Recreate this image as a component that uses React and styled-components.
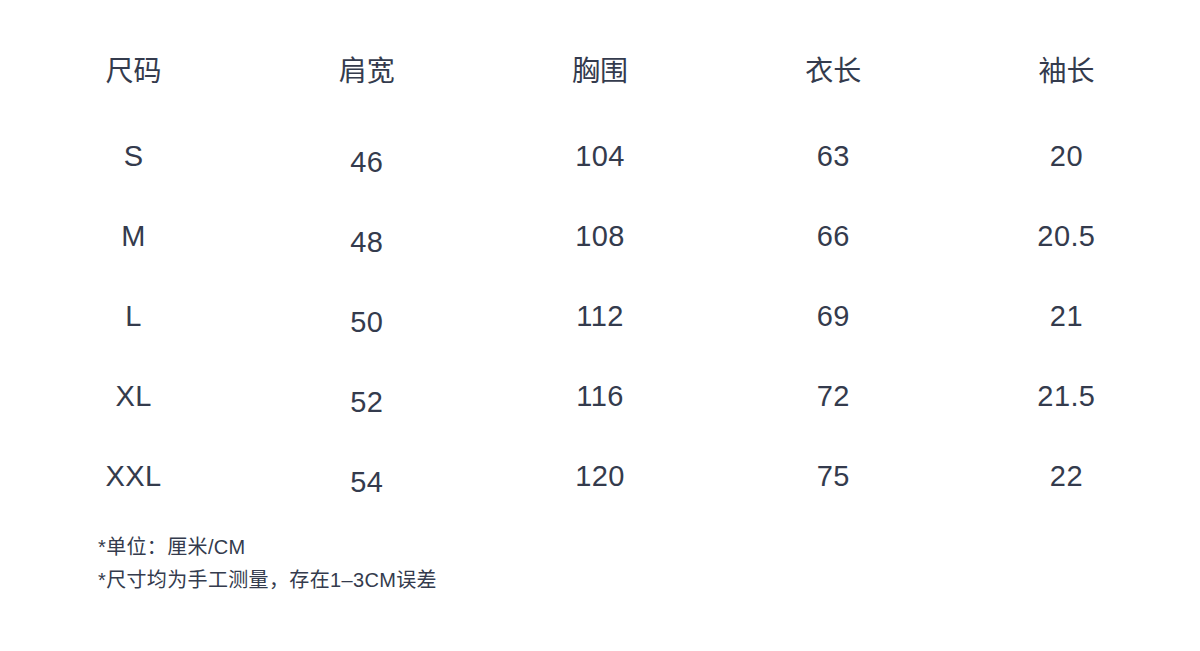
import styled, { createGlobalStyle } from 'styled-components';

const GlobalStyle = createGlobalStyle`
  html, body {
    margin: 0;
    padding: 0;
    background: #ffffff;
  }
  body {
    font-family: 'Liberation Sans', 'Noto Sans CJK SC', sans-serif;
    color: #343b4d;
  }
`;

const columns = ['尺码', '肩宽', '胸围', '衣长', '袖长'];

const rows = [
  ['S', '46', '104', '63', '20'],
  ['M', '48', '108', '66', '20.5'],
  ['L', '50', '112', '69', '21'],
  ['XL', '52', '116', '72', '21.5'],
  ['XXL', '54', '120', '75', '22'],
];

const Page = styled.div`
  width: 1200px;
  height: 651px;
  background: #fff;
  box-sizing: border-box;
  padding: 52px 17px 0;
`;

const Table = styled.div`
  display: grid;
  grid-template-columns: repeat(5, 1fr);
`;

const HeadCell = styled.div`
  height: 40px;
  line-height: 40px;
  margin-bottom: 44px;
  text-align: center;
  font-size: 28px;
`;

// 肩宽 column sits a few pixels lower in the source image
const Cell = styled.div`
  height: 80px;
  line-height: 40px;
  text-align: center;
  font-size: 29px;
  letter-spacing: 0.4px;
  padding-top: ${(p) => (p.$shift ? '6px' : '0')};
  box-sizing: border-box;
`;

const Notes = styled.div`
  padding: 0 0 0 81px;
  margin-top: -5px;
  display: flex;
  flex-direction: column;
  font-size: 20px;
  line-height: 33px;
  letter-spacing: 0.35px;
`;

export default function App() {
  return (
    <Page>
      <GlobalStyle />
      <Table>
        {columns.map((c) => (
          <HeadCell key={c}>{c}</HeadCell>
        ))}
        {rows.map((r) =>
          r.map((v, i) => (
            <Cell key={r[0] + i} $shift={i === 1}>
              {v}
            </Cell>
          ))
        )}
      </Table>
      <Notes>
        <span>*单位：厘米/CM</span>
        <span>*尺寸均为手工测量，存在1–3CM误差</span>
      </Notes>
    </Page>
  );
}
